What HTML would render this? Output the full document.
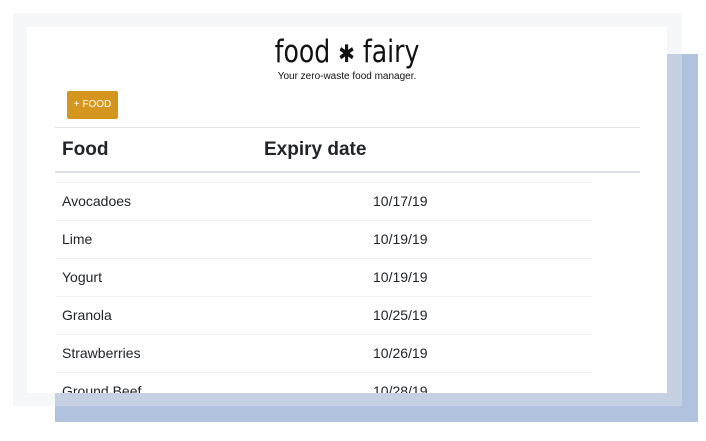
<!DOCTYPE html>
<html><head><style>
body{margin:0;width:706px;height:441px;background:#fff;position:relative;overflow:hidden;font-family:"Liberation Sans",sans-serif;color:#212529}
.a{position:absolute}
</style></head><body>
<div class="a" style="left:13px;top:13px;width:669px;height:393px;background:#f6f7f9"></div>
<div class="a" style="left:55px;top:54px;width:643px;height:368px;background:#b0c2de"></div>
<div class="a" style="left:55px;top:54px;width:627px;height:352px;background:#c5d0e3"></div>
<div class="a" style="left:27px;top:27px;width:640px;height:366px;background:#fff;overflow:hidden">
<div class="a" style="left:0;width:640px;top:8px;text-align:center;font-family:'DejaVu Sans Condensed','DejaVu Sans',sans-serif;font-size:28px;font-weight:300;color:#111;transform:scaleY(1.1)">food <span style="font-size:22px;font-weight:bold">✱</span> fairy</div>
<div class="a" style="left:0;width:640px;top:44px;text-align:center;font-size:10px;color:#111">Your zero-waste food manager.</div>
<div class="a" style="left:40px;top:64px;width:51px;height:28px;background:#d4961f;border-radius:2px;color:#fff;font-size:10px;line-height:28px;text-align:center">+ FOOD</div>
<div class="a" style="left:28px;top:100px;width:585px;height:1px;background:#e3e5e8"></div>
<div class="a" style="left:35px;top:112px;font-size:19px;font-weight:bold">Food</div>
<div class="a" style="left:237px;top:112px;font-size:19px;font-weight:bold">Expiry date</div>
<div class="a" style="left:28px;top:144px;width:585px;height:2px;background:#dde1e6"></div>
<div class="a" style="left:28px;top:155px;width:538px;height:1px;background:#eef0f2"></div>
<div class="a" style="left:35px;top:166px;font-size:14px;line-height:16px">Avocadoes</div><div class="a" style="left:346px;top:166px;font-size:14px;line-height:16px">10/17/19</div>
<div class="a" style="left:28px;top:193px;width:538px;height:1px;background:#eef0f2"></div>
<div class="a" style="left:35px;top:204px;font-size:14px;line-height:16px">Lime</div><div class="a" style="left:346px;top:204px;font-size:14px;line-height:16px">10/19/19</div>
<div class="a" style="left:28px;top:231px;width:538px;height:1px;background:#eef0f2"></div>
<div class="a" style="left:35px;top:242px;font-size:14px;line-height:16px">Yogurt</div><div class="a" style="left:346px;top:242px;font-size:14px;line-height:16px">10/19/19</div>
<div class="a" style="left:28px;top:269px;width:538px;height:1px;background:#eef0f2"></div>
<div class="a" style="left:35px;top:280px;font-size:14px;line-height:16px">Granola</div><div class="a" style="left:346px;top:280px;font-size:14px;line-height:16px">10/25/19</div>
<div class="a" style="left:28px;top:307px;width:538px;height:1px;background:#eef0f2"></div>
<div class="a" style="left:35px;top:318px;font-size:14px;line-height:16px">Strawberries</div><div class="a" style="left:346px;top:318px;font-size:14px;line-height:16px">10/26/19</div>
<div class="a" style="left:28px;top:345px;width:538px;height:1px;background:#eef0f2"></div>
<div class="a" style="left:35px;top:356px;font-size:14px;line-height:16px">Ground Beef</div><div class="a" style="left:346px;top:356px;font-size:14px;line-height:16px">10/28/19</div>
</div>
</body></html>
